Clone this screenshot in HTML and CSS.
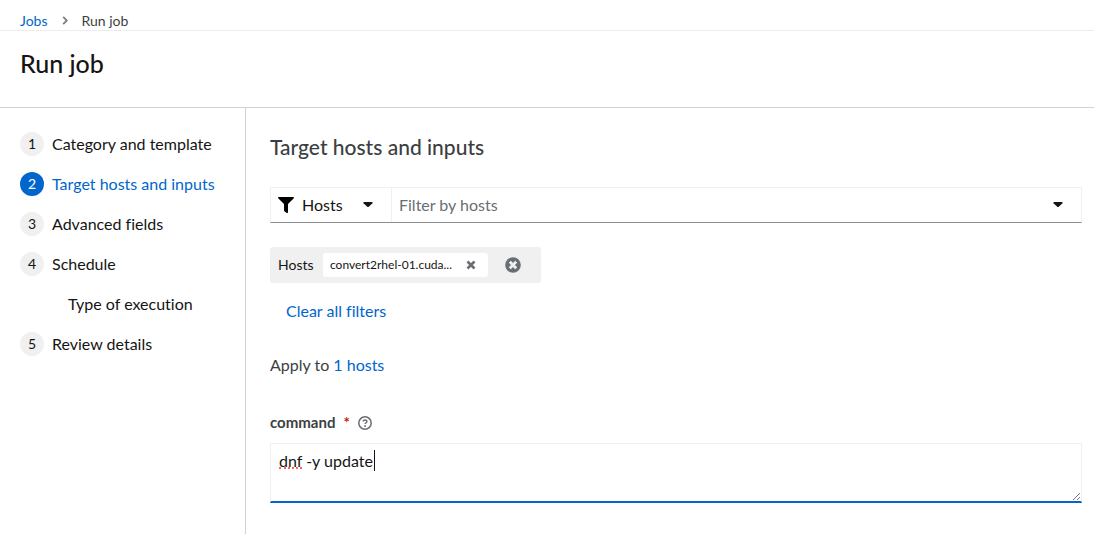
FILE: index.html
```html
<!DOCTYPE html>
<html lang="en">
<head>
<meta charset="utf-8">
<meta name="viewport" content="width=device-width, initial-scale=1">
<title>Run job</title>
<link rel="stylesheet" href="styles.css">
</head>
<body>
<nav class="breadcrumb" aria-label="Breadcrumb">
  <a href="#">Jobs</a>
  <svg class="crumb-sep" viewBox="0 0 6 10" aria-hidden="true"><path d="M1 1l4 4-4 4"/></svg>
  <span>Run job</span>
</nav>
<header class="page-header"><h1>Run job</h1></header>
<div class="wizard">
  <nav class="steps" aria-label="Wizard steps">
    <ol class="step-list">
      <li><button class="step" type="button"><span class="num">1</span>Category and template</button></li>
      <li><button class="step current" type="button" aria-current="step"><span class="num">2</span>Target hosts and inputs</button></li>
      <li><button class="step" type="button"><span class="num">3</span>Advanced fields</button></li>
      <li><button class="step" type="button"><span class="num">4</span>Schedule</button></li>
      <li><button class="step sub" type="button">Type of execution</button></li>
      <li><button class="step" type="button"><span class="num">5</span>Review details</button></li>
    </ol>
  </nav>
  <main class="content">
    <h2>Target hosts and inputs</h2>
    <div class="filter-bar">
      <div class="category">
        <svg class="funnel" viewBox="0 0 512 512" aria-hidden="true"><path d="M488 0H24C3 0-8 26 7 41l185 185v206c0 8 4 15 10 20l80 56c16 11 38 0 38-20V226L505 41c15-15 4-41-17-41z"/></svg>
        <select class="category-select" aria-label="Filter category"><option>Hosts</option></select>
        <svg class="caret" viewBox="0 0 10 6" aria-hidden="true"><path d="M1 0h8q1 .5.4 1.2L5.8 4.8q-.8.6-1.6 0L.6 1.2Q0 .5 1 0z"/></svg>
      </div>
      <input class="filter-input" type="text" placeholder="Filter by hosts" aria-label="Filter by hosts">
      <button class="toggle" type="button" aria-label="Open hosts menu">
        <svg class="caret" viewBox="0 0 10 6" aria-hidden="true"><path d="M1 0h8q1 .5.4 1.2L5.8 4.8q-.8.6-1.6 0L.6 1.2Q0 .5 1 0z"/></svg>
      </button>
    </div>
    <div class="chip-group">
      <span class="chip-label">Hosts</span>
      <span class="chip"><span class="chip-text">convert2rhel-01.cuda...</span>
        <button class="chip-close" type="button" aria-label="Remove host">
          <svg viewBox="0 0 10 10" aria-hidden="true"><path d="M1.5 1.5l7 7M8.5 1.5l-7 7"/></svg>
        </button>
      </span>
      <button class="group-close" type="button" aria-label="Remove group">
        <svg viewBox="0 0 16 16" aria-hidden="true"><circle cx="8" cy="8" r="7.8"/><path d="M4.8 4.8l6.4 6.4M11.2 4.8l-6.4 6.4"/></svg>
      </button>
    </div>
    <button class="clear" type="button">Clear all filters</button>
    <p class="apply">Apply to <a href="#">1 hosts</a></p>
    <div class="field-head">
      <label for="command">command</label>
      <span class="required" aria-hidden="true">*</span>
      <button class="help" type="button" aria-label="More info">
        <svg viewBox="0 0 14 14" aria-hidden="true"><circle cx="7" cy="7" r="6.2"/><path d="M5.1 5.5C5.3 3.5 8.9 3.4 8.9 5.5 8.9 6.8 7.1 6.7 7.1 8.1"/><circle class="dot" cx="7.1" cy="10" r=".95"/></svg>
      </button>
    </div>
    <div class="text-wrap">
      <textarea id="command" rows="2" spellcheck="false" required>dnf -y update</textarea>
      <span class="misspelling"></span>
      <span class="text-cursor"></span>
      <svg class="grip" viewBox="0 0 9 9" aria-hidden="true"><path d="M1 8l7-7M5 8l3-3"/></svg>
    </div>
  </main>
</div>
</body>
</html>
```
FILE: styles.css
```css
* { box-sizing: border-box; }
body {
  display: flex;
  flex-direction: column;
  min-height: 100vh;
  margin: 0;
  background: #fff;
  color: #151515;
  font: 16px/24px Lato, "Open Sans", sans-serif;
  font-variant-ligatures: none;
}
button, input, select, textarea { font: inherit; font-variant-ligatures: none; color: inherit; }
button { padding: 0; border: 0; background: none; text-align: left; cursor: pointer; }
a { color: #06c; text-decoration: none; }
h1, h2, p { margin: 0; }
.breadcrumb {
  display: flex;
  align-items: center;
  gap: 14px;
  padding: 11px 20px 0;
  border-bottom: 1px solid #ededed;
  color: #3c3f42;
  font-size: 14px;
  line-height: 19px;
}
.crumb-sep { width: 6px; height: 9px; fill: none; stroke: #7b7e82; stroke-width: 2; }
.page-header { padding: 16px 20px 28px; border-bottom: 1px solid #d2d2d2; }
h1 { font-size: 25px; font-weight: 500; line-height: 32px; }
.wizard { display: flex; flex: 1; }
.steps { flex: none; width: 246px; padding: 24px 20px; border-right: 1px solid #d2d2d2; }
.step-list { display: grid; gap: 16px; margin: 0; padding: 0; list-style: none; }
.step { display: flex; align-items: center; gap: 8px; white-space: nowrap; }
.num {
  width: 24px;
  height: 24px;
  border-radius: 50%;
  background: #f0f0f0;
  font-size: 14px;
  text-align: center;
}
.current { color: #06c; }
.current .num { background: #06c; color: #fff; }
.sub { padding-left: 48px; }
.content { flex: 1; min-width: 0; padding: 24px 12px 24px 24px; }
h2 { color: #3c3f42; font-size: 21px; font-weight: 500; line-height: 30px; }
.filter-bar { display: flex; height: 36px; margin-top: 25px; border: 1px solid #f0f0f0; border-bottom-color: #8a8d90; }
.category { display: flex; align-items: center; width: 121px; padding: 0 18px 0 7px; border-right: 1px solid #f0f0f0; }
.funnel { width: 16px; height: 16px; margin-right: 8px; }
.category-select { flex: 1; min-width: 0; padding: 0; border: 0; background: none; appearance: none; }
.caret { flex: none; display: block; width: 10px; height: 6px; fill: #151515; }
.filter-input { flex: 1; min-width: 0; padding: 0 7px; border: 0; background: none; outline: 0; }
.filter-input::placeholder { color: #6a6e73; opacity: 1; }
.toggle { padding: 0 18px; }
.chip-group {
  display: flex;
  align-items: center;
  width: fit-content;
  margin-top: 24px;
  padding: 6px 20px 6px 8px;
  border-radius: 3px;
  background: #f0f0f0;
}
.chip-label { width: 45px; font-size: 14px; }
.chip { display: flex; align-items: center; justify-content: space-between; width: 165px; padding: 0 12px 0 7px; border-radius: 3px; background: #fff; font-size: 12px; }
.chip-close svg { display: block; width: 10px; height: 10px; stroke: #6a6e73; stroke-width: 2.6; }
.group-close { margin-left: 17px; }
.group-close svg { display: block; width: 16px; height: 16px; fill: #6a6e73; }
.group-close path { stroke: #f0f0f0; stroke-width: 2.8; }
.clear { display: block; margin: 16px 0 0 16px; color: #06c; }
.apply { margin-top: 30px; color: #3c3f42; }
.field-head { display: flex; align-items: center; margin-top: 35px; line-height: 21px; font-size: 15px; color: #3c3f42; }
.field-head label { font-weight: 700; }
.required { margin: 0 8px; color: #c9190b; font-weight: 700; }
.help svg { display: block; width: 14px; height: 14px; fill: none; stroke: #6a6e73; stroke-width: 1.5; }
.help .dot { fill: #6a6e73; stroke: none; }
.text-wrap { position: relative; margin-top: 10px; }
textarea {
  display: block;
  width: 100%;
  height: 60px;
  padding: 5px 8px;
  border: 1px solid #f0f0f0;
  border-bottom: 2px solid #06c;
  outline: 0;
  background: #fff;
  resize: none;
}
.misspelling { position: absolute; top: 24px; left: 9px; width: 23px; border-bottom: 2px dotted #fa6464; }
.text-cursor { position: absolute; top: 7px; left: 104px; width: 1px; height: 21px; background: #151515; }
.grip { position: absolute; right: 1px; bottom: 2px; width: 9px; height: 9px; fill: none; stroke: #777; }
```
